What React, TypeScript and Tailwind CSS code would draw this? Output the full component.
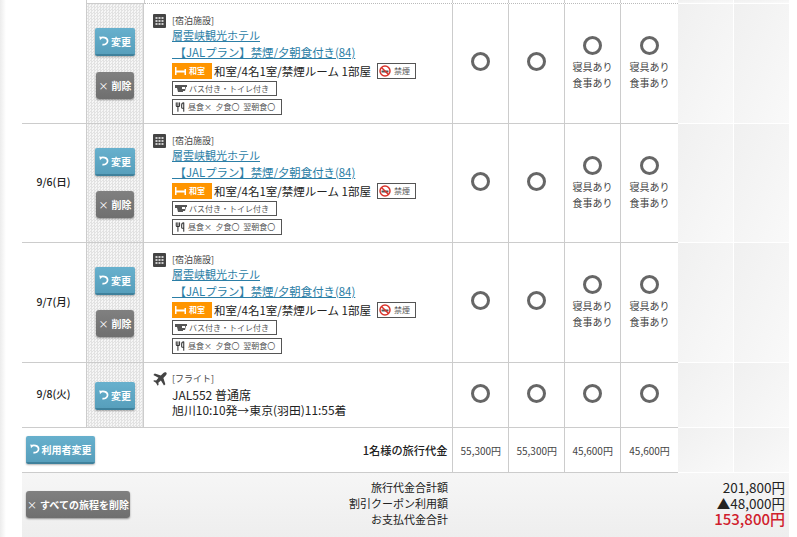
import React from "react";
import { Utensils } from "lucide-react";

const FONT = "font-['Noto_Sans_CJK_JP','Liberation_Sans',sans-serif]";

function Refresh() {
  return (
    <svg width="10" height="10" viewBox="0 0 10 10" className="shrink-0" fill="none">
      <path d="M1 2.2 C3 1 8.6 1 8.6 5 C8.6 8 5.6 9 3.4 8.6" stroke="white" strokeWidth="1.7" />
      <path d="M0.4 .2 L3.4 1.6 L1 4.2 Z" fill="white" />
    </svg>
  );
}

function BlueBtn({ label, className }: { label: string; className: string }) {
  return (
    <div className={`flex items-center justify-center gap-[2px] rounded-[2px] border-b-2 border-[#3f819c] bg-gradient-to-b from-[#67b0cd] to-[#579fbc] text-[10px] font-bold text-white shadow-[0_1px_2px_rgba(0,0,0,0.3)] ${className}`}>
      <Refresh />
      <span>{label}</span>
    </div>
  );
}

function GrayBtn({ label, className }: { label: string; className: string }) {
  return (
    <div className={`flex items-center justify-center gap-[3px] rounded-[3px] bg-gradient-to-b from-[#808080] to-[#6f6f6f] text-[10px] font-bold text-white shadow-[0_1px_2px_rgba(0,0,0,0.4)] ${className}`}>
      <span className="font-normal">×</span>
      <span>{label}</span>
    </div>
  );
}

function Building() {
  return (
    <svg width="13" height="14" viewBox="0 0 13 14" className="shrink-0">
      <rect width="13" height="14" rx="1" fill="#444" />
      {[3, 6, 9].map((x) =>
        [3, 6, 9].map((y) => <rect key={`${x}-${y}`} x={x - 0.5} y={y} width="2" height="2" fill="#ccc" />)
      )}
    </svg>
  );
}

function Plane() {
  return (
    <svg width="14" height="14" viewBox="0 0 24 24" className="shrink-0" fill="#444">
      <path d="M23 1.4 C21.6 0 19 .4 17.4 2 L13.4 6 L3 2.6 L0.6 5 L9.4 10 L5.4 14.4 L2 14 L0.4 15.6 L5 18.6 L8 23.4 L9.6 21.8 L9.2 18.4 L13.6 14.4 L18.8 23.2 L21.2 20.8 L17.8 10.2 L21.8 6.2 C23.4 4.6 24 2.6 23 1.4 Z" />
    </svg>
  );
}

function BedIcon() {
  return (
    <svg width="11" height="8" viewBox="0 0 11 8" className="shrink-0" fill="white">
      <rect x="0" y="0" width="1.5" height="8" />
      <rect x="9.5" y="2" width="1.5" height="6" />
      <rect x="1" y="3.5" width="9" height="2" />
    </svg>
  );
}

function NoSmoke() {
  return (
    <svg width="12" height="12" viewBox="0 0 12 12" className="shrink-0" fill="none">
      <rect x="2.5" y="5.5" width="7" height="2" fill="#555" />
      <circle cx="6" cy="6" r="5" stroke="#d9342b" strokeWidth="1.5" />
      <path d="M2.5 2.5 L9.5 9.5" stroke="#d9342b" strokeWidth="1.5" />
    </svg>
  );
}

function Bath() {
  return (
    <svg width="12" height="9" viewBox="0 0 12 9" className="shrink-0">
      <path d="M0 1 H12 V3 H11 L10 7 H8 V8 H3 L2 4 H0 Z" fill="#555" />
      <rect x="7" y="3" width="3" height="2" fill="white" />
    </svg>
  );
}

function Ring() {
  return <div className="h-[19px] w-[19px] shrink-0 rounded-full border-[3px] border-[#666]" />;
}

function Mark({ extra }: { extra?: boolean }) {
  return (
    <div className={`flex flex-col items-center ${extra ? "" : "pb-[4px]"}`}>
      <Ring />
      {extra && (
        <div className="mt-[4px] text-center text-[10px] leading-[16px] text-[#444]">
          <div>寝具あり</div>
          <div>食事あり</div>
        </div>
      )}
    </div>
  );
}

const cellLine = "border-r border-[#cccccc]";
const dots = "bg-[repeating-conic-gradient(#e2e2e2_0_25%,#f6f6f6_0_50%)] bg-[length:3px_3px]";

function Faded() {
  return (
    <>
      <div className="h-full w-[56px] border-r border-b border-white bg-gradient-to-br from-[#f0f0f0] to-[#f9f9f9]" />
      <div className="h-full w-[55px] border-b border-white bg-gradient-to-br from-[#f0f0f0] to-[#f9f9f9]" />
    </>
  );
}

function Row({
  h,
  date,
  actions,
  children,
  extra,
}: {
  h: string;
  date?: string;
  actions: React.ReactNode;
  children: React.ReactNode;
  extra?: boolean;
}) {
  return (
    <div className={`flex shrink-0 ${h}`}>
      <div className="flex w-[656px] border-b border-[#cccccc]">
        <div className={`flex w-[65px] items-center justify-center pb-[2px] pr-[1px] text-[10.5px] font-medium text-[#222] ${cellLine}`}>{date}</div>
        <div className={`flex w-[57px] flex-col items-center ${cellLine} ${dots}`}>{actions}</div>
        <div className={`w-[309px] ${cellLine}`}>{children}</div>
        <div className={`flex w-[56px] items-center justify-center ${cellLine}`}><Mark /></div>
        <div className={`flex w-[56px] items-center justify-center ${cellLine}`}><Mark /></div>
        <div className={`flex w-[56px] items-center justify-center ${cellLine}`}><Mark extra={extra} /></div>
        <div className="flex w-[57px] items-center justify-center"><Mark extra={extra} /></div>
      </div>
      <Faded />
    </div>
  );
}

function Hotel() {
  return (
    <div className="flex pl-[9px] pt-[10px]">
      <div className="w-[19px]"><Building /></div>
      <div className="flex flex-col items-start text-[#333]">
        <div className="text-[9px] leading-[13px] text-[#444]">[宿泊施設]</div>
        <a className="text-[11px] leading-[16px] text-[#2b7ea6] underline">層雲峡観光ホテル</a>
        <a className="mt-[1px] text-[11.4px] leading-[17px] text-[#2b7ea6] underline">&nbsp;【JALプラン】禁煙/夕朝食付き(84)</a>
        <div className="mt-[2px] flex items-center">
          <div className="flex h-[16px] w-[40px] items-center gap-[3px] bg-[#ff9500] pl-[3px] text-[8px] font-bold text-white">
            <BedIcon />
            <span>和室</span>
          </div>
          <span className="ml-[2px] text-[11.5px] leading-[16px] text-[#222]">和室/4名1室/禁煙ルーム 1部屋</span>
          <div className="ml-[6px] flex h-[16px] w-[39px] items-center gap-[3px] border border-[#555] pl-[1px] text-[8px] text-[#555]">
            <NoSmoke />
            <span>禁煙</span>
          </div>
        </div>
        <div className="mt-[2px] flex h-[15px] w-[105px] items-center gap-[2px] border border-[#555] pl-[2px] text-[8px] text-[#555]">
          <Bath />
          <span>バス付き・トイレ付き</span>
        </div>
        <div className="mt-[3px] flex h-[16px] w-[110px] items-center gap-[3px] border border-[#555] pl-[2px] text-[8px] text-[#555]">
          <Utensils size={10} strokeWidth={2.5} className="shrink-0 text-[#333]" />
          <span className="whitespace-pre">昼食×  夕食〇  翌朝食〇</span>
        </div>
      </div>
    </div>
  );
}

function HotelActions({ top, gap }: { top: string; gap: string }) {
  return (
    <div className={`flex flex-col items-center ${top}`}>
      <BlueBtn label="変更" className="h-[28px] w-[40px]" />
      <GrayBtn label="削除" className={`h-[27px] w-[38px] ${gap}`} />
    </div>
  );
}

function Price({ v, last }: { v: string; last?: boolean }) {
  return (
    <div className={`flex items-center justify-center text-[10px] text-[#444] ${last ? "w-[57px]" : `w-[56px] ${cellLine}`}`}>{v}</div>
  );
}

export default function App() {
  return (
    <div className={`relative flex h-[537px] w-full overflow-hidden bg-white ${FONT}`}>
      <div className="h-full w-[6px] shrink-0 bg-gradient-to-r from-[#ececec] to-white" />
      <div className="ml-[16px] flex w-[767px] flex-col">
        <div className="flex h-[4px] shrink-0">
          <div className="w-[64px] shrink-0" />
          <div className="h-full w-[59px] shrink-0 border-x border-b border-[#cccccc]" />
          <div className="flex w-[533px] border-b border-dotted border-[#bbbbbb]">
            <div className={`w-[308px] ${cellLine}`} />
            <div className={`w-[56px] ${cellLine}`} />
            <div className={`w-[56px] ${cellLine}`} />
            <div className={`w-[56px] ${cellLine}`} />
          </div>
          <Faded />
        </div>
        <Row h="h-[120px]" actions={<HotelActions top="pt-[24px]" gap="mt-[16px]" />} extra>
          <Hotel />
        </Row>
        <Row h="h-[119px]" date="9/6(日)" actions={<HotelActions top="pt-[24px]" gap="mt-[15px]" />} extra>
          <Hotel />
        </Row>
        <Row h="h-[120px]" date="9/7(月)" actions={<HotelActions top="pt-[24px]" gap="mt-[15px]" />} extra>
          <Hotel />
        </Row>
        <Row h="h-[65px]" date="9/8(火)" actions={<BlueBtn label="変更" className="mt-[19px] h-[28px] w-[40px]" />}>
          <div className="flex pl-[9px] pt-[9px]">
            <div className="w-[19px]"><Plane /></div>
            <div className="text-[#222]">
              <div className="text-[9px] leading-[14px] text-[#444]">[フライト]</div>
              <div className="mt-[1px] text-[12px] leading-[15px]">JAL552 普通席</div>
              <div className="text-[11.9px] leading-[15px]">旭川10:10発→東京(羽田)11:55着</div>
            </div>
          </div>
        </Row>
        <div className="flex h-[45px] shrink-0">
          <div className="flex w-[656px] border-b border-[#cccccc]">
            <div className="flex w-[431px] items-center justify-between pl-[4px] pr-[5px]">
              <BlueBtn label="利用者変更" className="h-[28px] w-[69px]" />
              <span className="text-[11.2px] font-medium text-[#222]">1名様の旅行代金</span>
            </div>
            <div className="w-[0px] border-r border-[#cccccc]" />
            <Price v="55,300円" />
            <Price v="55,300円" />
            <Price v="45,600円" />
            <Price v="45,600円" last />
          </div>
          <Faded />
        </div>
        <div className="flex h-[64px] shrink-0 items-start bg-gradient-to-b from-[#f6f6f6] to-[#eeeeee] pt-[6px]">
          <GrayBtn label="すべての旅程を削除" className="ml-[4px] mt-[12px] h-[27px] w-[104px]" />
          <div className="w-[318px] text-right text-[11px] leading-[16px] text-[#222]">
            <div>旅行代金合計額</div>
            <div>割引クーポン利用額</div>
            <div>お支払代金合計</div>
          </div>
          <div className="flex-1 whitespace-nowrap pr-[4px] text-right text-[13.5px] leading-[16px] text-[#222]">
            <div>201,800円</div>
            <div>▲48,000円</div>
            <div className="text-[15px] font-medium text-[#d0202c]">153,800円</div>
          </div>
        </div>
      </div>
    </div>
  );
}
